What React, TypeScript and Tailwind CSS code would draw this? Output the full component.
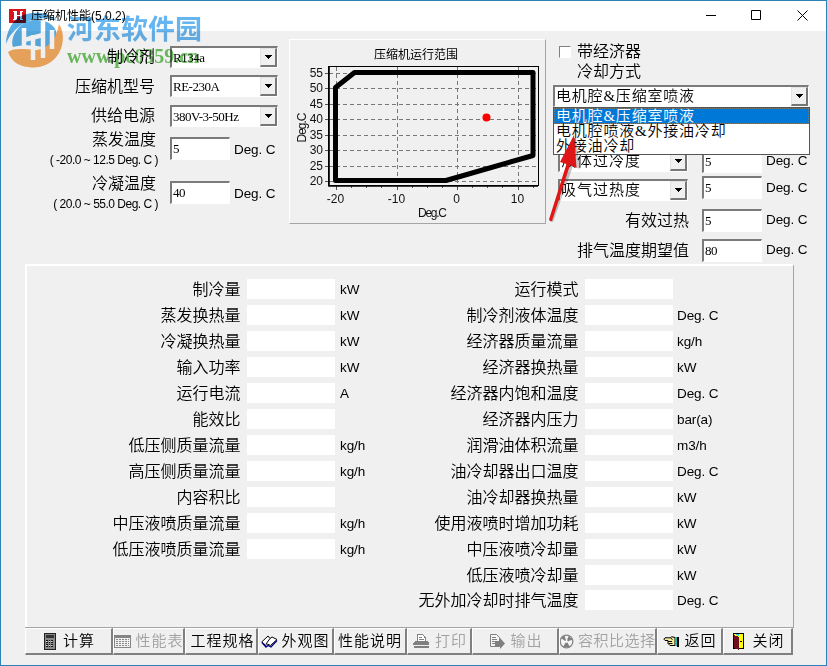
import type { ReactNode } from "react";

const cjk = "font-['Liberation_Sans','Noto_Sans_CJK_SC',sans-serif]";
const serif = "font-['Liberation_Serif','Noto_Sans_CJK_SC',serif]";

const leftResults = [
  ["制冷量", "kW"],
  ["蒸发换热量", "kW"],
  ["冷凝换热量", "kW"],
  ["输入功率", "kW"],
  ["运行电流", "A"],
  ["能效比", ""],
  ["低压侧质量流量", "kg/h"],
  ["高压侧质量流量", "kg/h"],
  ["内容积比", ""],
  ["中压液喷质量流量", "kg/h"],
  ["低压液喷质量流量", "kg/h"],
];

const rightResults = [
  ["运行模式", ""],
  ["制冷剂液体温度", "Deg. C"],
  ["经济器质量流量", "kg/h"],
  ["经济器换热量", "kW"],
  ["经济器内饱和温度", "Deg. C"],
  ["经济器内压力", "bar(a)"],
  ["润滑油体积流量", "m3/h"],
  ["油冷却器出口温度", "Deg. C"],
  ["油冷却器换热量", "kW"],
  ["使用液喷时增加功耗", "kW"],
  ["中压液喷冷却量", "kW"],
  ["低压液喷冷却量", "kW"],
  ["无外加冷却时排气温度", "Deg. C"],
];

function Select({ value, className }: { value: string; className: string }) {
  return (
    <div
      className={`flex h-[22px] shrink-0 items-center border-2 border-r border-b border-[#7b7b7b] border-r-white border-b-white bg-white ${serif} ${className}`}
    >
      <span className="flex-1 pl-px leading-[19px] whitespace-nowrap">{value}</span>
      <span className="flex h-[19px] w-[17px] items-center justify-center border border-r-2 border-b-2 border-[#e3e3e3] border-r-[#777] border-b-[#777] bg-[#f0f0f0]">
        <svg width="7" height="4" viewBox="0 0 7 4" shapeRendering="crispEdges">
          <path d="M0 0h7L3.5 4z" />
        </svg>
      </span>
    </div>
  );
}

function Field({ value }: { value: string }) {
  return (
    <div
      className={`h-[23px] w-[60px] shrink-0 border-2 border-r border-b border-[#7b7b7b] border-r-white border-b-white bg-white pl-px text-[13px] leading-[19px] tracking-[-0.4px] ${serif}`}
    >
      {value}
    </div>
  );
}

function Unit({ children }: { children: ReactNode }) {
  return <span className="text-[13.5px] leading-5 tracking-[-0.1px] whitespace-nowrap">{children}</span>;
}

function ConditionInput({ label, range, value }: { label: string; range: string; value: string }) {
  return (
    <div className="flex h-11 items-start">
      <div className="w-[157px] pt-px text-right whitespace-nowrap">
        <div className="pr-[2px] leading-[20px]">{label}</div>
        <div className="text-[12px] leading-[20px] tracking-[-0.5px]">{range}</div>
      </div>
      <div className="flex items-center pt-2 pl-3">
        <Field value={value} />
        <span className="pl-1">
          <Unit>Deg. C</Unit>
        </span>
      </div>
    </div>
  );
}

function Results({ rows, unitPadding }: { rows: string[][]; unitPadding: string }) {
  return (
    <div className="flex flex-col">
      {rows.map(([label, unit], i) => (
        <div key={label} className={`flex items-center ${i > 10 ? "h-[25px]" : "h-[26px]"}`}>
          <span className="w-[213.5px] shrink-0 pt-[2px] text-right whitespace-nowrap">{label}</span>
          <span className="ml-[6.5px] h-5 w-[88px] shrink-0 bg-white" />
          <span className={unitPadding}>
            <Unit>{unit}</Unit>
          </span>
        </div>
      ))}
    </div>
  );
}

const xTicks = [
  [46.5, "-20"],
  [107.5, "-10"],
  [167.5, "0"],
  [228.5, "10"],
] as const;
const yTicks = [
  [33.5, 55],
  [48.5, 50],
  [64.5, 45],
  [79.5, 40],
  [95.5, 35],
  [110.5, 30],
  [126.5, 25],
  [141.5, 20],
] as const;

function RangeChart() {
  return (
    <div className="h-[185px] w-[257px] border border-white border-r-[#a5a5a5] border-b-[#a5a5a5]">
      <svg width="255" height="183" viewBox="0 0 255 183" fontSize="12" fontWeight="400" fill="#111">
        <text x="126" y="19" textAnchor="middle" fill="#000">
          压缩机运行范围
        </text>
        <text x="142.5" y="177" textAnchor="middle" textLength="29">
          Deg.C
        </text>
        <text transform="translate(15.5 87.5) rotate(-90)" textAnchor="middle" textLength="30">
          Deg.C
        </text>
        <g stroke="#777" strokeDasharray="4 3">
          {xTicks.map(([x]) => (
            <path key={x} d={`M${x} 27V146`} />
          ))}
          {yTicks.map(([y]) => (
            <path key={y} d={`M39 ${y}H248`} />
          ))}
        </g>
        <g stroke="#555">
          {xTicks.map(([x]) => (
            <path key={x} d={`M${x} 146v4m15 -4v2m15 -2v2m15 -2v2`} />
          ))}
          {yTicks.map(([y]) => (
            <path key={y} d={`M35 ${y}h4`} />
          ))}
        </g>
        {xTicks.map(([x, label]) => (
          <text key={x} x={x - 1} y="163" textAnchor="middle">
            {label}
          </text>
        ))}
        {yTicks.map(([y, label]) => (
          <text key={y} x="33" y={y + 3.4} textAnchor="end">
            {label}
          </text>
        ))}
        <rect x="38.5" y="26.5" width="210" height="119" fill="none" stroke="#000" />
        <path d="M39 27V146H248" fill="none" stroke="#000" strokeWidth="1.6" />
        <path
          d="M45.5 140.5V47.5L64.5 32.5H243V115.5L156 140.5Z"
          fill="none"
          stroke="#000"
          strokeWidth="5"
          strokeLinejoin="round"
        />
        <circle cx="196.5" cy="77.5" r="4" fill="#f00" />
      </svg>
    </div>
  );
}

function CalculatorIcon() {
  return (
    <svg width="12" height="17" viewBox="0 0 12 17" shapeRendering="crispEdges">
      <rect width="12" height="17" fill="#222" />
      <path d="M1 1h10v15H1z" fill="#888" />
      <path d="M2 2h8v3H2z" fill="#333" />
      <path d="M2 7.5h8M2 9.5h8M2 11.5h8M2 13.5h8" stroke="#111" strokeDasharray="1.5 1" />
      <path d="M2 8.5h8M2 12.5h8" stroke="#ddd" strokeDasharray="1 1.5" />
    </svg>
  );
}

function TableIcon() {
  return (
    <svg width="17" height="15" viewBox="0 0 17 15" shapeRendering="crispEdges">
      <path d="M0 1h17v13H0z" fill="#858585" />
      <path d="M1 4h15v9H1z" fill="#f0f0f0" />
      <path d="M2 5.5h13M2 7.5h13M2 9.5h13M2 11.5h13" stroke="#888" strokeDasharray="2 1" />
    </svg>
  );
}

function BookIcon() {
  return (
    <svg width="17" height="13" viewBox="0 0 17 13">
      <path d="M.7 7L7 1L9 3.500L11 2L16 4.500L9.500 10.500L6.500 9L5 10.500Z" fill="#fff" stroke="#000" />
      <path d="M9 3.500L5 9" stroke="#000" />
      <path d="M1 7.500L5 12L7 10.500L10 12L16 5.500" fill="none" stroke="#000080" strokeWidth="1.300" />
    </svg>
  );
}

function PrinterIcon() {
  return (
    <svg width="16" height="16" viewBox="0 0 16 16" shapeRendering="crispEdges">
      <path d="M4.500 9V1.500h5l2.500 3V9M6 4.500h3M6 6.500h5" fill="#fff" stroke="#808080" />
      <path d="M2 8h12l2 2v2H0v-2zM1 13h15v2H1z" fill="#808080" />
    </svg>
  );
}

function ExportIcon() {
  return (
    <svg width="17" height="16" viewBox="0 0 17 16">
      <path d="M1.500 13.500V1.500h6l3 3v9z" fill="#f5f5f5" stroke="#808080" />
      <path d="M3 4.500h4M3 6.500h5M3 8.500h3M3 10.500h3" stroke="#808080" />
      <path d="M6 8h5V5l5 5.500L11 16v-3H6z" fill="#808080" />
    </svg>
  );
}

function RatioIcon() {
  return (
    <svg width="14" height="15" viewBox="0 0 14 15">
      <circle cx="6.500" cy="7.500" r="6.300" fill="#f5f5f5" stroke="#858585" strokeWidth="1.300" />
      <path d="M6.500 8L1 4L4.500 1.500ZM6.500 8L8.500 2L12.500 5.500ZM6.500 7L10 13H3Z" fill="#808080" />
      <circle cx="6.500" cy="7.500" r="1.300" fill="#fff" />
    </svg>
  );
}

function HandIcon() {
  return (
    <svg width="17" height="11" viewBox="0 0 17 11">
      <path
        d="M5 4.500H2Q-.3 3 2 1.800H7.500L8.500 .7L12 1.500V9.500H7L5 7.500Z"
        fill="#f5ec9a"
        stroke="#000"
        strokeWidth="1"
      />
      <path d="M5 5.500h4M5.500 7.500h4M7.500 2l2 1.500" stroke="#000" />
      <path d="M12 1h2v9h-2z" fill="#20b2b2" />
      <path d="M14 1h2v10h-2z" />
    </svg>
  );
}

function DoorIcon() {
  return (
    <svg width="12" height="17" viewBox="0 0 12 17" shapeRendering="crispEdges">
      <path d="M.5 .5h10v15H.5z" fill="#ff0" stroke="#000" />
      <path d="M1 2l5 2v13l-5-2z" fill="#700c1c" />
      <path d="M2 1h4v2z" fill="#22c5ee" />
      <path d="M7 8h2v1H7z" />
    </svg>
  );
}

type ToolButton = { label: string; layout: string; icon?: ReactNode; disabled?: boolean };

const buttons: ToolButton[] = [
  { label: "计算", layout: "w-[88px] justify-center gap-[7px] pl-[2px]", icon: <CalculatorIcon /> },
  { label: "性能表", layout: "w-[72px] justify-center gap-[5px]", icon: <TableIcon />, disabled: true },
  { label: "工程规格", layout: "w-[73px] justify-center pl-[3px]" },
  { label: "外观图", layout: "w-[76px] justify-center gap-[3px]", icon: <BookIcon /> },
  { label: "性能说明", layout: "w-[73px] justify-center" },
  { label: "打印", layout: "w-[65px] justify-center gap-1.5 pl-[2px]", icon: <PrinterIcon />, disabled: true },
  { label: "输出", layout: "w-[87px] justify-center gap-1 pl-[2px]", icon: <ExportIcon />, disabled: true },
  { label: "容积比选择", layout: "w-[98px] gap-1", icon: <RatioIcon />, disabled: true },
  { label: "返回", layout: "w-[66px] justify-center gap-1 pl-px", icon: <HandIcon /> },
  { label: "关闭", layout: "w-[70px] justify-center gap-[7px] pl-[3px]", icon: <DoorIcon /> },
];

function Toolbar() {
  return (
    <div className="flex h-[27px]">
      {buttons.map(({ label, layout, icon, disabled }) => (
        <button
          key={label}
          disabled={disabled}
          className={`flex shrink-0 items-center border border-r-2 border-b-2 border-white border-r-[#808080] border-b-[#808080] text-[15px] leading-5 whitespace-nowrap ${layout} ${
            disabled ? "text-[#a2a2a2]" : "text-black"
          } ${label.length > 4 ? "tracking-[0.5px]" : "tracking-[1px]"}`}
        >
          {icon && <span className="shrink-0">{icon}</span>}
          <span>{label}</span>
        </button>
      ))}
    </div>
  );
}

function Watermark() {
  return (
    <div className="pointer-events-none absolute top-[10px] left-[4px] flex mix-blend-multiply">
      <svg className="shrink-0" width="62" height="60" viewBox="0 0 62 60">
        <path
          d="M1 33C1 20 8 9 16 5C24 1 42 -1 52 10C44 6 31 7 24 10C14 14 5 22 1 33Z"
          fill="#5aaee6"
        />
        <path
          d="M8 36C5 27 12 15 22 11C34 6 48 11 51 20C53 28 49 34 42 37C31 34 19 33 8 36Z"
          fill="#5aaee6"
        />
        <path
          d="M3 41C9 37 18 38 30 39C41 39 51 30 54 13C60 22 59 36 52 45C45 54 34 58 23 56C12 55 6 49 3 41Z"
          fill="#f4ab60"
        />
        <path d="M19 17V38M28 24V49M19 29L38 24M38 10V47M47 19V38" stroke="#fff" strokeWidth="4.500" fill="none" />
      </svg>
      <div className="flex flex-col pt-[2px]">
        <span className="font-['Noto_Sans_CJK_SC',sans-serif] text-[27px] leading-[30px] font-bold whitespace-nowrap text-[#66b5f0]">
          河东软件园
        </span>
        <span className="font-['Liberation_Serif',serif] text-[20px] leading-[26px] font-bold text-[#6dc25f]">
          www.pc0359.cn
        </span>
      </div>
    </div>
  );
}

export default function App() {
  return (
    <div
      className={`relative flex h-[666px] w-[827px] flex-col overflow-hidden border border-[#2c82b8] bg-[#f0f0f0] text-[16px] font-[350] text-black ${cjk}`}
    >
      <header className="flex h-[30px] shrink-0 items-center bg-white pr-[17px] pl-2">
        <svg width="17" height="14" viewBox="0 0 17 14">
          <path d="M0 0h17v14H0z" fill="#d9141e" />
          <path d="M5 2h3v4h3V2h3v1h-1v7h1v1h-3V7H8v3q0 2-4 1v-1h1V3H4V2z" fill="#fff" />
        </svg>
        <span className="flex-1 pl-[5px] text-[12px] font-normal">压缩机性能(5.0.2)</span>
        <svg width="103" height="12" viewBox="0 0 103 12" fill="none" stroke="#000">
          <path d="M0 5.500h10M45.500 .5h9v9h-9zM91.500 .5l10 10M101.500 .5l-10 10" />
        </svg>
      </header>

      <section className="flex h-[233px] shrink-0">
        <div className="flex w-[288px] flex-col pt-[11px]">
          {[
            ["制冷剂", "R134a"],
            ["压缩机型号", "RE-230A"],
            ["供给电源", "380V-3-50Hz"],
          ].map(([label, value]) => (
            <div key={label} className="flex h-[29.5px] items-center">
              <span className="w-[154px] pt-px text-right">{label}</span>
              <Select value={value} className="ml-[15px] w-[108px] text-[13px] tracking-[-0.5px]" />
            </div>
          ))}
          <div className="-mt-[2px] flex flex-col">
            <ConditionInput label="蒸发温度" range="( -20.0 ~ 12.5 Deg. C )" value="5" />
            <ConditionInput label="冷凝温度" range="( 20.0 ~ 55.0 Deg. C )" value="40" />
          </div>
        </div>

        <div className="pt-2">
          <RangeChart />
        </div>

        <div className="flex w-[280px] flex-col pt-[11px] pl-[7px]">
          <div className="flex h-5 items-center pl-[6px]">
            <span className="size-3 border border-[#808080] border-r-white border-b-white bg-white" />
            <span className="pl-[6px]">带经济器</span>
          </div>
          <div className="h-5 pl-6 leading-5">冷却方式</div>
          <div className="relative mt-[3px]">
            <Select value="电机腔&压缩室喷液" className="w-[256px] text-[15px] tracking-[0.8px]" />
            <div
              className={`absolute top-[22px] left-0 z-10 w-[257px] border border-[#555] bg-white text-[15px] leading-[15px] tracking-[0.8px] ${serif}`}
            >
              <div className="bg-[#0078d7] pt-px pl-[2px] text-white outline-1 -outline-offset-1 outline-dotted outline-[#7a7a70]">
                电机腔&压缩室喷液
              </div>
              <div className="pl-[2px]">电机腔喷液&外接油冷却</div>
              <div className="pl-[2px]">外接油冷却</div>
            </div>
          </div>
          <div className="mt-[41px] flex h-[26px] items-center">
            <Select value="液体过冷度" className="ml-[5px] w-[130px] text-[15px] tracking-[1px]" />
            <div className="flex items-center gap-1 pl-[14px]">
              <Field value="5" />
              <Unit>Deg. C</Unit>
            </div>
          </div>
          <div className="mt-[3px] flex h-[26px] items-center">
            <Select value="吸气过热度" className="ml-[5px] w-[130px] text-[15px] tracking-[1px]" />
            <div className="mb-[5px] flex items-center gap-1 pl-[14px]">
              <Field value="5" />
              <Unit>Deg. C</Unit>
            </div>
          </div>
          {[
            ["有效过热", "5"],
            ["排气温度期望值", "80"],
          ].map(([label, value]) => (
            <div key={label} className="mt-1 flex h-[26px] items-center">
              <span className="w-[136px] pt-px text-right">{label}</span>
              <div className="flex items-center gap-1 pl-[13px]">
                <Field value={value} />
                <Unit>Deg. C</Unit>
              </div>
            </div>
          ))}
        </div>
      </section>

      <main className="ml-6 flex h-[363px] w-[769px] shrink-0 border-t-2 border-r border-l-2 border-white border-r-[#a5a5a5] pt-[10px]">
        <div className="w-[338px] shrink-0">
          <Results rows={leftResults} unitPadding="pl-[5px]" />
        </div>
        <Results rows={rightResults} unitPadding="pl-1" />
      </main>

      <footer className="ml-6 w-[769px] border-t border-[#a5a5a5]">
        <Toolbar />
      </footer>

      <Watermark />

      <svg
        className="pointer-events-none absolute top-[133px] left-[543px] z-20"
        width="38"
        height="92"
        viewBox="0 0 38 92"
      >
        <path d="M32 3L36 35L29 32L9 88L6 87L24 30L18 28Z" fill="#000" opacity=".22" />
        <path d="M30 1L32.500 34L26 31L8 87Q6 88 5 85.500L22.500 30L16 28Z" fill="#e01515" />
      </svg>
    </div>
  );
}
